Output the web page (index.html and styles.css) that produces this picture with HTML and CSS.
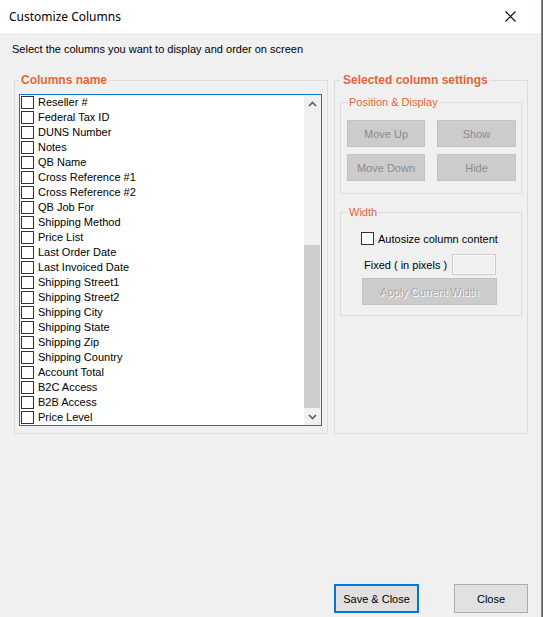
FILE: index.html
```html
<!DOCTYPE html>
<html>
<head>
<meta charset="utf-8">
<title>Customize Columns</title>
<link rel="stylesheet" href="styles.css">
</head>
<body>
<div class="dialog">
  <div class="titlebar">
    <span class="title">Customize Columns</span>
    <svg class="close" width="11" height="11" viewBox="0 0 11 11"><path d="M0.5 0.5 L10.5 10.5 M10.5 0.5 L0.5 10.5" stroke="#000" stroke-width="1.1" fill="none"/></svg>
  </div>
  <div class="content">
    <p class="intro">Select the columns you want to display and order on screen</p>
    <div class="groups">
      <fieldset class="group group-columns">
        <legend class="group-title">Columns name</legend>
        <div class="listbox">
          <ul class="items">
            <li class="item"><span class="check"></span>Reseller #</li>
            <li class="item"><span class="check"></span>Federal Tax ID</li>
            <li class="item"><span class="check"></span>DUNS Number</li>
            <li class="item"><span class="check"></span>Notes</li>
            <li class="item"><span class="check"></span>QB Name</li>
            <li class="item"><span class="check"></span>Cross Reference #1</li>
            <li class="item"><span class="check"></span>Cross Reference #2</li>
            <li class="item"><span class="check"></span>QB Job For</li>
            <li class="item"><span class="check"></span>Shipping Method</li>
            <li class="item"><span class="check"></span>Price List</li>
            <li class="item"><span class="check"></span>Last Order Date</li>
            <li class="item"><span class="check"></span>Last Invoiced Date</li>
            <li class="item"><span class="check"></span>Shipping Street1</li>
            <li class="item"><span class="check"></span>Shipping Street2</li>
            <li class="item"><span class="check"></span>Shipping City</li>
            <li class="item"><span class="check"></span>Shipping State</li>
            <li class="item"><span class="check"></span>Shipping Zip</li>
            <li class="item"><span class="check"></span>Shipping Country</li>
            <li class="item"><span class="check"></span>Account Total</li>
            <li class="item"><span class="check"></span>B2C Access</li>
            <li class="item"><span class="check"></span>B2B Access</li>
            <li class="item"><span class="check"></span>Price Level</li>
          </ul>
          <div class="scrollbar">
            <div class="arrow">
              <svg width="9" height="6" viewBox="0 0 9 6"><path d="M1 5 L4.5 1.5 L8 5" stroke="#606060" stroke-width="1.7" fill="none"/></svg>
            </div>
            <div class="track"><div class="thumb"></div></div>
            <div class="arrow">
              <svg width="9" height="6" viewBox="0 0 9 6"><path d="M1 1 L4.5 4.5 L8 1" stroke="#606060" stroke-width="1.7" fill="none"/></svg>
            </div>
          </div>
        </div>
      </fieldset>
      <fieldset class="group group-settings">
        <legend class="group-title">Selected column settings</legend>
        <fieldset class="subgroup sub-position">
          <legend class="sub-title">Position &amp; Display</legend>
          <div class="btn-grid">
            <button class="btn-disabled">Move Up</button>
            <button class="btn-disabled">Show</button>
            <button class="btn-disabled">Move Down</button>
            <button class="btn-disabled">Hide</button>
          </div>
        </fieldset>
        <fieldset class="subgroup sub-width">
          <legend class="sub-title">Width</legend>
          <div class="autosize-row"><span class="check"></span><span>Autosize column content</span></div>
          <div class="fixed-row"><span class="fixed-label">Fixed ( in pixels )</span><span class="textbox"></span></div>
          <button class="btn-apply">Apply Current Width</button>
        </fieldset>
      </fieldset>
    </div>
  </div>
  <div class="footer">
    <button class="btn btn-default">Save &amp; Close</button>
    <button class="btn">Close</button>
  </div>
</div>
</body>
</html>
```

FILE: styles.css
```css
html, body {
  margin: 0;
  padding: 0;
  background: #56615f;
}
.dialog {
  width: 541px;
  height: 617px;
  border-right: 1px solid #8a8a8a;
  background: #f0f0f0;
  display: flex;
  flex-direction: column;
  font-family: "Liberation Sans", Arial, sans-serif;
  font-size: 11px;
  color: #000;
}
.titlebar {
  height: 33px;
  flex: none;
  background: #fff;
  display: flex;
  align-items: center;
  padding-left: 9px;
  padding-right: 25px;
}
.title {
  font-family: "Noto Sans", "Liberation Sans", sans-serif;
  font-size: 12px;
  flex: 1;
  margin-top: -1px;
}
.close {
  display: block;
  margin-top: -1px;
}
.content {
  padding: 10px 0 0 12px;
}
.intro {
  margin: 0;
  line-height: 13px;
}
.groups {
  display: flex;
  margin-top: 17px;
}
fieldset {
  margin: 0;
  min-width: 0;
  border: 1px solid #dcdcdc;
}
.group {
  padding: 0;
}
.group-title {
  color: #e5643a;
  font-weight: bold;
  font-size: 12px;
  line-height: 14px;
  padding: 0 2px;
}
.group-columns {
  width: 314px;
  box-sizing: border-box;
  margin-left: 2px;
  padding: 7px 5px 7px 0;
}
.group-columns .group-title {
  margin-left: 4px;
}
.listbox {
  height: 332px;
  box-sizing: border-box;
  margin-left: 4px;
  border: 1px solid #0078d7;
  background: #fff;
  display: flex;
}
.items {
  list-style: none;
  margin: 0;
  padding: 0;
  flex: 1;
}
.item {
  height: 15px;
  display: flex;
  align-items: center;
  line-height: 15px;
  white-space: nowrap;
}
.check {
  width: 13px;
  height: 13px;
  box-sizing: border-box;
  border: 1px solid #333;
  background: #fff;
  flex: none;
}
.item .check {
  margin: 0 4px 0 1px;
}
.scrollbar {
  width: 17px;
  background: #f0f0f0;
  display: flex;
  flex-direction: column;
}
.arrow {
  height: 17px;
  display: flex;
  align-items: center;
  justify-content: center;
  flex: none;
}
.arrow svg {
  display: block;
}
.track {
  flex: 1;
  display: flex;
  flex-direction: column;
  justify-content: flex-end;
}
.thumb {
  height: 163px;
  margin-right: 1px;
  background: #cdcdcd;
}
.group-settings {
  width: 194px;
  box-sizing: border-box;
  margin-left: 6px;
}
.group-settings .group-title {
  margin-left: 6px;
}
.subgroup {
  padding: 0;
  margin-left: 5px;
  margin-right: 5px;
}
.sub-title {
  color: #e5643a;
  font-size: 11px;
  line-height: 14px;
  padding: 0 1px;
  margin-left: 7px;
}
.sub-position {
  margin-top: 8px;
  padding: 11px 0 12px 0;
}
.btn-grid {
  display: grid;
  grid-template-columns: 78px 79px;
  grid-auto-rows: 27px;
  column-gap: 12px;
  row-gap: 7px;
  margin-left: 6px;
}
button {
  font-family: "Liberation Sans", Arial, sans-serif;
  font-size: 11px;
  margin: 0;
  padding: 0;
  box-sizing: border-box;
}
.btn-disabled {
  background: #cccccc;
  border: 1px solid #c2c2c2;
  color: #8b8b8b;
}
.sub-width {
  margin-top: 11px;
  padding: 13px 0 10px 0;
}
.autosize-row {
  display: flex;
  align-items: center;
  height: 13px;
  margin-left: 20px;
}
.autosize-row .check {
  margin-right: 4px;
}
.fixed-row {
  display: flex;
  align-items: center;
  margin-top: 9px;
  margin-left: 23px;
  height: 21px;
}
.fixed-label {
  width: 88px;
}
.textbox {
  width: 44px;
  height: 21px;
  box-sizing: border-box;
  border: 1px solid #cccccc;
  box-shadow: inset 0 0 0 1px #fafafa;
  background: #f0f0f0;
}
.btn-apply {
  display: block;
  width: 135px;
  height: 27px;
  margin: 3px 0 0 21px;
  background: #cccccc;
  border: 1px solid #c2c2c2;
  color: #a8a8a8;
  text-shadow: 1px 1px 0 #fff;
}
.footer {
  margin-top: auto;
  display: flex;
  justify-content: flex-end;
  padding: 0 13px 4px 0;
  gap: 35px;
}
.btn {
  height: 29px;
  width: 74px;
  background: #e1e1e1;
  border: 1px solid #adadad;
  color: #000;
}
.btn-default {
  width: 85px;
  border: 2px solid #0078d7;
}
```
